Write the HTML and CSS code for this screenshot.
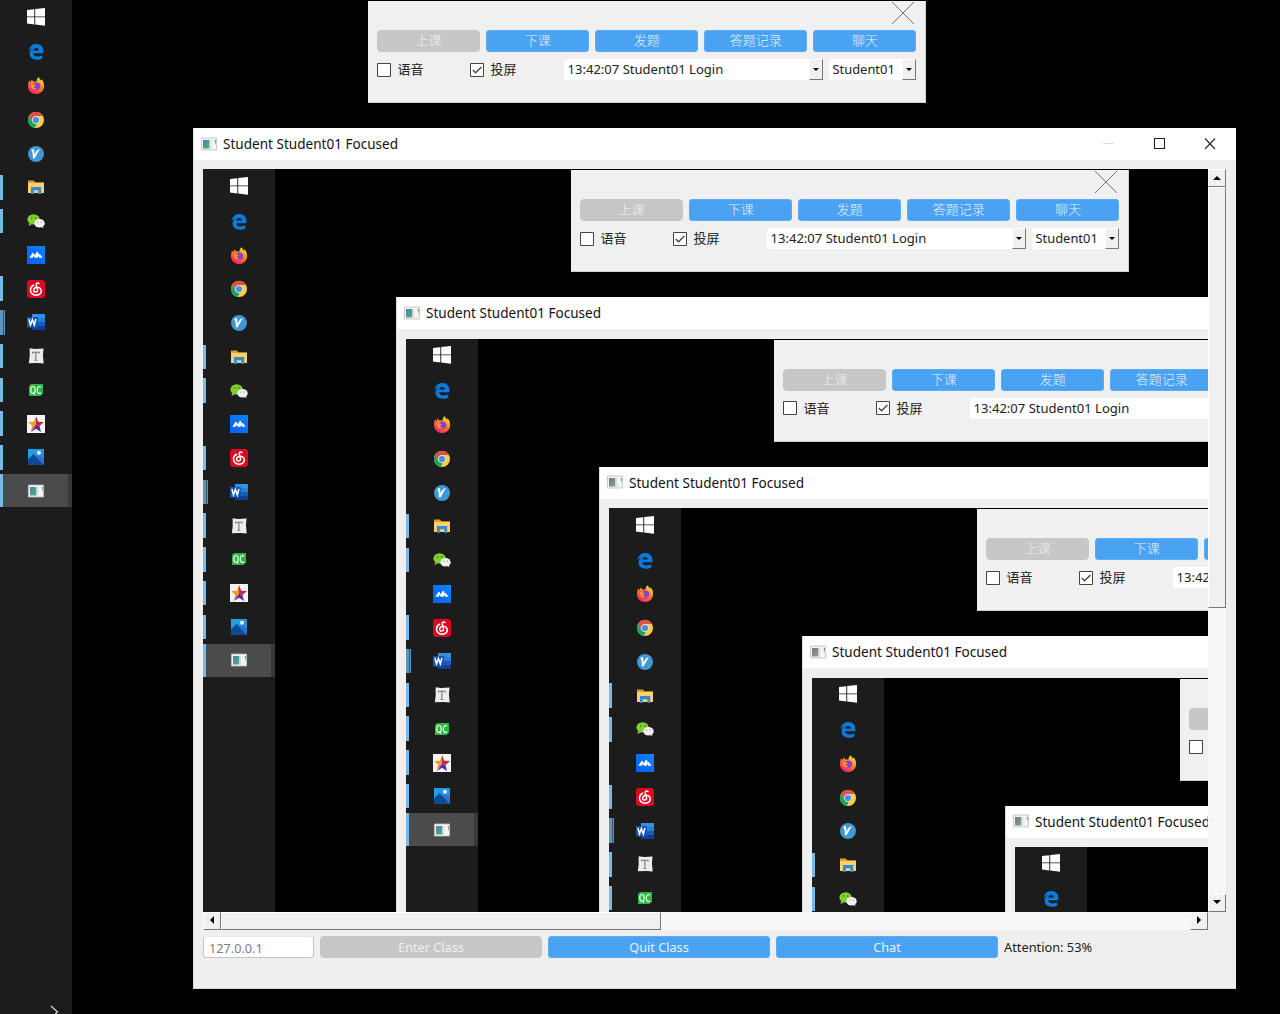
FILE: index.html
```html
<!DOCTYPE html>
<html lang="zh-CN">
<head>
<meta charset="utf-8">
<title>Student Student01 Focused</title>
<link rel="stylesheet" href="styles.css">
</head>
<body>
<svg class="sprite" aria-hidden="true">
  <defs>
    <linearGradient id="ff" x1="0.9" y1="0" x2="0.3" y2="1"><stop offset="0" stop-color="#fff04a"/><stop offset=".45" stop-color="#ff8a1c"/><stop offset="1" stop-color="#f0206c"/></linearGradient>
    <linearGradient id="mt" x1="0" y1="1" x2="1" y2="0"><stop offset="0" stop-color="#0a5cf5"/><stop offset="1" stop-color="#0a86ff"/></linearGradient>
    <linearGradient id="sky" x1="0" y1="0" x2="1" y2="1"><stop offset="0" stop-color="#1fa7e8"/><stop offset="1" stop-color="#2a7fd8"/></linearGradient>
    <linearGradient id="pane" x1="0" y1="0" x2="1" y2="1"><stop offset="0" stop-color="#4d7fae"/><stop offset="1" stop-color="#4fb183"/></linearGradient>
  </defs>
  <symbol id="i-start" viewBox="0 0 18 18"><path fill="#fff" d="M0 2.1 7.3 1.2V8.4H0zM8.2 1.1 18 0v8.4H8.2zM0 9.3h7.3v7.2L0 15.6zM8.2 9.3H18V17.8L8.2 16.6z"/></symbol>
  <symbol id="i-edge" viewBox="0 0 18 18"><path fill="#0b7bdb" d="M1.500 8.300C2.200 3.700 5.200 1 9.300 1c4.700 0 7.100 3 7.100 7.300v2H6.200c.2 2.300 2.100 3.100 4.600 3.100 1.700 0 3.200-.5 4.500-1.200v3.300c-1.400.9-3.200 1.300-5.400 1.300-4.600 0-7.300-2.400-7.300-6.200 0-2.500 1.400-4.500 3.500-5.500C4.200 5.800 2.600 6.700 1.500 8.300zM6.300 7.500h5.500c0-1.700-.9-2.600-2.500-2.600S6.600 5.900 6.300 7.500z"/></symbol>
  <symbol id="i-firefox" viewBox="0 0 18 18"><path fill="url(#ff)" d="M2.200 3.200c.3 1 .8 1.400 1.500 1.800L4.600 2.200c.5 1.200 1.200 1.700 2 2.300h3C9.300 2.800 10.300 1.200 12 .3c.2 1.700 1.200 2.400 2.200 3.300l.3-1.300c1.800 1.800 2.700 4.200 2.600 6.900C16.900 13.900 13.400 17 9 17s-8-3.400-8-7.800c0-2.400.4-4.400 1.200-6z"/><circle cx="9.500" cy="9.100" r="3.700" fill="#8a3ed8"/><path d="M4 7.400c2-.4 3.200.1 4.700.9-.1 1-1.300 1.100-2.200 1.300.4 1.400 1.800 2 3.200 1.700-1.800 2.100-5.700 1.100-5.700-3.900z" fill="#ff9a22"/></symbol>
  <symbol id="i-chrome" viewBox="0 0 18 18"><circle cx="9" cy="9" r="8" fill="#ffce45"/><path fill="#de5145" d="M2 5A8 8 0 0 1 16 5H9a4 4 0 0 0-3.500 6z"/><path fill="#1ba260" d="M2 5 5.600 11A4 4 0 0 0 9.600 13L7.800 17A8 8 0 0 1 2 5z"/><circle cx="9" cy="9" r="3.800" fill="#dfe6ee"/><circle cx="9" cy="9" r="3.100" fill="#4a8bf5"/></symbol>
  <symbol id="i-vnote" viewBox="0 0 18 18"><circle cx="9" cy="9" r="8" fill="#3d98d3"/><path fill="#fff" d="M4.200 4.800 7 4l.6 5.400c1.200-2.700 2.600-4.900 5.300-5.400-1.400 2.500-3.500 5.600-5.200 9.300H5.800c.2-3.200 0-5.700-1.600-8.500z"/></symbol>
  <symbol id="i-folder" viewBox="0 0 18 18"><path fill="#e0a022" d="M1 2.500h6l1.300 1.700H17V7H1z"/><path fill="#fdd06d" d="M1 5h16v10H1z"/><path fill="#2f8cd8" d="M4 9h10.200v7h-2.800v-3.700H6.800V16H4z"/></symbol>
  <symbol id="i-wechat" viewBox="0 0 18 18"><ellipse cx="6.600" cy="7.400" rx="6.200" ry="5.200" fill="#7fd12f"/><path d="m2 11-.4 3 3.200-1.700z" fill="#7fd12f"/><circle cx="4.700" cy="6" r=".8" fill="#35601b"/><circle cx="8.800" cy="6" r=".8" fill="#35601b"/><ellipse cx="12.500" cy="11.200" rx="5.200" ry="4.300" fill="#f0f0f0"/><path d="m14 14.600 2.300 1.600-.2-3z" fill="#f0f0f0"/><circle cx="10.900" cy="10.100" r=".6" fill="#888"/><circle cx="14.100" cy="10.100" r=".6" fill="#888"/></symbol>
  <symbol id="i-meeting" viewBox="0 0 18 18"><path fill="url(#mt)" d="M0 0h18v18H0z"/><path fill="#fff" d="M2.300 11.800 5.300 7.300q.9-1.200 1.500 0l.8 2.200L9.500 6.300q.9-1.200 1.500 0l.7 2.300q.9-1.200 1.500 0l2.400 3.200h-3.400l-.7-1.800-1 1.800H7.700l-.9-2-1.200 2z"/></symbol>
  <symbol id="i-music" viewBox="0 0 18 18"><rect width="18" height="18" rx="3" fill="#dc0720"/><path fill="none" stroke="#fff" stroke-width="1.500" stroke-linecap="round" d="M12 3.500C10.500 2.500 8.900 3.300 9.300 5l1.300 5c.3 2.700-4.200 2.700-4 .1.200-3.100 5-4 7-1.300 2 3.200-.6 6.400-4.600 6.400-3.500 0-5.700-2.500-5.500-5.500.1-2 1.300-3.600 3.200-4.400"/></symbol>
  <symbol id="i-word" viewBox="0 0 18 18"><path fill="#3590df" d="M5 1h13v4H5z"/><path fill="#2b7cd3" d="M5 5h13v4H5z"/><path fill="#185abd" d="M5 9h13v4H5z"/><path fill="#103f91" d="M5 13h13v4H5z"/><path fill="#1556b4" d="M0 4h11v10.500H0z"/><path fill="none" stroke="#fff" stroke-width="1.500" d="m1.900 6 1.600 6L5.400 6.500 7.300 12l1.600-6"/></symbol>
  <symbol id="i-typora" viewBox="0 0 18 18"><path fill="#ececec" d="M2.600 1.200 8 2l8.600-.4-.7 6.400.8 8.600-6.100-.7-8.800.3.900-6.700z"/><path fill="#777" d="M5 4.800h7.600v2h-.7l-.4-1H9.400v7l1.100.4v.6H7.200v-.6l1.100-.4v-7H6.100l-.4 1H5z"/></symbol>
  <symbol id="i-qt" viewBox="0 0 18 18"><path fill="#2fb544" d="M4 3h12v9.500L13.500 15H2V5z"/><path fill="none" stroke="#e9ffe9" stroke-width="1.200" d="M6 5.500c-1.600 0-2.200 1.500-2.200 3.500s.6 3.500 2.200 3.500S8.200 11 8.200 9 7.600 5.500 6 5.500zM6.500 11.800 8.200 13.600M14.200 6.100c-2.500-1.400-3.900 0-3.900 2.900s1.400 4.300 3.900 2.900"/></symbol>
  <symbol id="i-star" viewBox="0 0 18 18"><path fill="#f4f4f4" d="M0 0h18v18H0z"/><path fill="#e8a020" d="M9 1 6.800 6.800 1 7l4.500 4L9 9.800z"/><path fill="#c8243c" d="m9 1 2.200 5.800 5.800.2-4.500 4L9 9.800z"/><path fill="#f47b20" d="m5.500 11-2 6L9 9.800z"/><path fill="#5b2a9c" d="M9 9.800 4 17l5-3.300 5 3.300-1.500-6z"/></symbol>
  <symbol id="i-photo" viewBox="0 0 18 18"><path fill="url(#sky)" d="M1 1h16v15.500H1z"/><path fill="#0c4a94" d="M1 11.500 6.500 6l10 10.500H1z"/><path fill="#2f6fd2" d="m9.500 9.200 2.700-2.400L17 11.500v5h-.5z"/><circle cx="12" cy="4.800" r="2" fill="#e9fbff"/></symbol>
  <symbol id="i-app" viewBox="0 0 18 18"><path fill="#f4f4f4" stroke="#bdbdbd" stroke-width=".8" d="M1.400 3h15.200v12H1.400z"/><path fill="url(#pane)" d="M3 5h6.500v8.500H3z"/><path fill="#d9dede" d="M9.500 5h1.800v8.500H9.500z"/><path fill="#5aa28c" d="M14.500 5h1.500v5z"/></symbol>
</svg>

<div class="screen" id="desktop"></div>

<template id="screen-tpl">
  <nav class="taskbar">
    <div class="task start"><svg><use href="#i-start"/></svg></div>
    <div class="task"><svg><use href="#i-edge"/></svg></div>
    <div class="task"><svg><use href="#i-firefox"/></svg></div>
    <div class="task"><svg><use href="#i-chrome"/></svg></div>
    <div class="task"><svg><use href="#i-vnote"/></svg></div>
    <div class="task open"><svg><use href="#i-folder"/></svg></div>
    <div class="task open"><svg><use href="#i-wechat"/></svg></div>
    <div class="task"><svg><use href="#i-meeting"/></svg></div>
    <div class="task open"><svg><use href="#i-music"/></svg></div>
    <div class="task open stacked"><svg><use href="#i-word"/></svg></div>
    <div class="task open"><svg><use href="#i-typora"/></svg></div>
    <div class="task open"><svg><use href="#i-qt"/></svg></div>
    <div class="task open"><svg><use href="#i-star"/></svg></div>
    <div class="task open"><svg><use href="#i-photo"/></svg></div>
    <div class="task open active"><svg><use href="#i-app"/></svg></div>
    <svg class="tray" viewBox="0 0 10 12"><path d="m1 2 6.500 6L1 14"/></svg>
  </nav>
  <section class="teacher">
    <svg class="teacher-close" viewBox="0 0 24 24"><path d="m1 1 22 22M23 1 1 23"/></svg>
    <div class="actions">
      <button class="btn off">上课</button><button class="btn">下课</button><button class="btn">发题</button><button class="btn">答题记录</button><button class="btn">聊天</button>
    </div>
    <div class="options">
      <label class="check voice"><svg viewBox="0 0 14 14"><path d="M.5.5h13v13H.5z"/></svg><span>语音</span></label>
      <label class="check cast"><svg viewBox="0 0 14 14"><path d="M.5.5h13v13H.5z"/><path class="tick" d="M2.800 7 5.600 9.800 11.400 4"/></svg><span>投屏</span></label>
      <div class="combo log"><span>13:42:07 Student01 Login</span><i class="drop"></i></div>
      <div class="combo who"><span>Student01</span><i class="drop"></i></div>
    </div>
  </section>
  <section class="window">
    <header class="titlebar">
      <svg class="app-icon"><use href="#i-app"/></svg>
      <h1>Student Student01 Focused</h1>
      <svg class="controls" viewBox="0 0 116 14"><path class="min" d="M0 6.500h11"/><path d="M51.500 1.500h10v10h-10z"/><path d="m102 1.500 10 10.500M112 1.500l-10 10.500"/></svg>
    </header>
    <div class="client">
      <div class="viewport"></div>
      <div class="bar vertical"><b class="raised up"></b><b class="raised thumb"></b><b class="raised down"></b></div>
      <div class="bar horizontal"><b class="raised left"></b><b class="raised thumb"></b><b class="raised right"></b></div>
    </div>
    <footer class="footer">
      <div class="address">127.0.0.1</div>
      <button class="btn off">Enter Class</button><button class="btn">Quit Class</button><button class="btn">Chat</button>
      <span class="attention">Attention: 53%</span>
    </footer>
  </section>
</template>
<script src="main.js"></script>
</body>
</html>
```
FILE: styles.css
```css
* { box-sizing: border-box; }
body {
  margin: 0;
  background: #000;
  overflow: hidden;
  font-family: "Noto Sans", "Noto Sans CJK SC", sans-serif;
  font-size: 13.050px;
  color: #222;
}
.sprite { position: absolute; width: 0; height: 0; }
.screen { position: relative; width: 1280px; height: 1014px; overflow: hidden; background: #000; }

/* taskbar */
.taskbar { display: flex; flex-direction: column; width: 72.400px; height: 100%; background: #1c1c1c; }
.task { display: flex; align-items: center; justify-content: center; flex: none; height: 33.750px; position: relative; }
.task svg { width: 18px; height: 18px; }
.task.start { height: 33px; margin-bottom: 2.600px; }
.task.open::before { content: ""; position: absolute; left: 0; top: 4.600px; width: 3px; height: 24.500px; background: #76b9ed; }
.task.stacked::before { width: 5px; background: linear-gradient(90deg, #5d94be 3px, #36556c 3px, #36556c 3.600px, #5d94be 3.600px); }
.task.active { background: linear-gradient(90deg, #4b4b4b 68px, #383838 68px); height: 33px; }
.task.active::before { top: 0; height: 33px; }
.tray { width: 10px; height: 12px; margin: auto 0 -2px 50px; fill: none; stroke: #ddd; stroke-width: 1.200; }

/* teacher panel */
.teacher {
  position: absolute; left: 368px; top: 1px; width: 558px; height: 102px;
  display: flex; flex-direction: column; padding: 0 8.500px 0 9px;
  background: #f0f0f0; border-bottom: 1px solid #d0d0d0; border-right: 1px solid #d0d0d0;
}
.teacher-close { align-self: flex-end; width: 24px; height: 24px; margin-right: 1.500px; margin-top: -.5px; fill: none; stroke: #777; stroke-width: 1; }
.actions { display: grid; grid-template-columns: repeat(5, 1fr); gap: 6px; margin-top: 5.500px; }
.btn {
  height: 22px; padding: 0; border: 1px solid #5cacf4; border-radius: 3px; background: #4aa2f2;
  color: #e4f1fd; font: inherit; font-size: 12.700px; line-height: 20px; text-align: center; white-space: nowrap;
}
.btn.off { border-color: #c7c7c7; background: #c7c7c7; color: #efefef; border-radius: 4px; }
.actions .btn { font-size: 13px; font-weight: 300; line-height: 19px; padding-bottom: 1px; }
.options { display: flex; align-items: center; height: 22px; margin-top: 6.500px; }
.check { display: flex; align-items: center; gap: 6.500px; flex: none; font-size: 13px; white-space: nowrap; }
.check svg { width: 14px; height: 14px; fill: #fff; stroke: #444; }
.check span { margin-top: -2px; }
.check .tick { fill: none; stroke-width: 1.300; }
.check.voice { width: 93px; }
.check.cast { width: 94px; }
.combo { display: flex; align-items: stretch; justify-content: space-between; height: 21px; padding-left: 3.500px; background: #fff; border-radius: 3px; line-height: 21px; white-space: nowrap; }
.combo.log { width: 259px; }
.combo.who { flex: 1; margin-left: 6px; margin-right: .5px; font-size: 12.900px; }
.drop { width: 14px; border: 1px solid; border-color: #fff #777 #777 #fff; background: #f0f0f0; display: flex; align-items: center; justify-content: center; }
.drop::after { content: ""; border: 3.500px solid transparent; border-top-color: #000; border-bottom: 0; }

/* student window */
.window { position: absolute; left: 193px; top: 128px; width: 1043px; height: 861px; background: #efefef; border-left: 1px solid #dcdcdc; border-bottom: 1px solid #d8d8d8; }
.titlebar { display: flex; align-items: center; height: 32px; padding: 0 17px 0 6px; background: #fff; }
.app-icon { width: 18px; height: 18px; margin-right: 5px; margin-top: -1px; }
.screen .screen .screen .app-icon { filter: grayscale(.8); }
.titlebar h1 { margin: 0; font-size: 13.550px; font-weight: 400; line-height: 32px; white-space: nowrap; color: #111; }
.controls { width: 116px; height: 14px; margin: 0 0 0 auto; fill: none; stroke: #222; stroke-width: 1.100; }
.controls .min { stroke: #ddd; }
.client { display: grid; grid-template-columns: 1005px 18px; grid-template-rows: 742.600px 18px; margin: 9.400px 0 0 9px; }
.viewport { overflow: hidden; background: #000; }
.bar { display: flex; background: repeating-conic-gradient(#f0f0f0 0 25%, #fff 0 50%) 0 0 / 2px 2px; }
.vertical { flex-direction: column; }
.raised { display: flex; align-items: center; justify-content: center; flex: none; width: 18px; height: 18px; padding: 0 1px 1px 0; background: #f0f0f0; border: 1px solid; border-color: #fff #777 #777 #fff; }
.vertical .thumb { height: 421px; }
.horizontal .thumb { width: 440px; }
.down { margin-top: auto; }
.right { margin-left: auto; }
.up::after, .down::after, .left::after, .right::after { content: ""; border: 4px solid transparent; }
.up::after { border-top: 0; border-bottom-color: #000; }
.down::after { border-bottom: 0; border-top-color: #000; }
.left::after { border-left: 0; border-right-color: #000; }
.right::after { border-right: 0; border-left-color: #000; }
.footer { display: grid; grid-template-columns: 111px 222px 222px 222px auto; column-gap: 6px; margin: 6px 0 0 9px; }
.address { height: 22px; padding-left: 5px; border: 1px solid #c4c4c4; border-top-color: #e8e8e8; border-radius: 3px; background: #fff; color: #808080; font-size: 12.700px; line-height: 23px; }
.attention { font-size: 12.800px; line-height: 22px; }
```
FILE: main.js
```js
// Each shared screen shows the desktop again inside its own viewport.
const DEPTH = 5;
const template = document.getElementById('screen-tpl');

function fill(screen, level) {
  screen.append(template.content.cloneNode(true));
  if (level > 0) {
    screen.querySelectorAll('.bar, .footer, .controls, .tray').forEach((el) => el.remove());
  }
  if (level === DEPTH) {
    screen.querySelectorAll('.teacher, .window').forEach((el) => el.remove());
    return;
  }
  const inner = document.createElement('div');
  inner.className = 'screen';
  screen.querySelector('.viewport').append(inner);
  fill(inner, level + 1);
}

fill(document.getElementById('desktop'), 0);
```
